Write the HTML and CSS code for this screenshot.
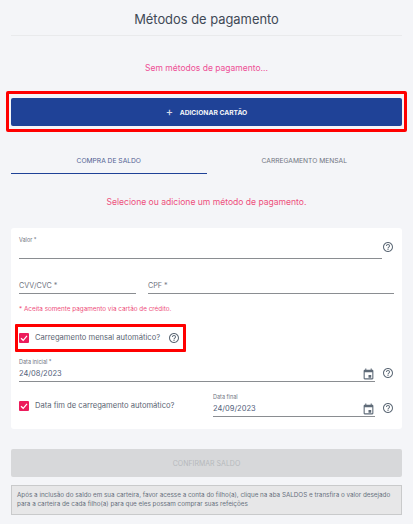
FILE: index.html
```html
<!DOCTYPE html>
<html lang="pt-BR">
<head>
    <meta charset="UTF-8">
    <meta name="viewport" content="width=device-width, initial-scale=1.0">
    <title>Métodos de pagamento</title>
    <link rel="stylesheet" href="styles.css">
</head>
<body>
    <svg class="sprite" width="0" height="0">
        <symbol id="help" viewBox="0 0 24 24">
            <path d="M11 18h2v-2h-2v2zm1-16C6.48 2 2 6.48 2 12s4.48 10 10 10 10-4.48 10-10S17.52 2 12 2zm0 18c-4.41 0-8-3.59-8-8s3.59-8 8-8 8 3.59 8 8-3.59 8-8 8zm0-14c-2.21 0-4 1.79-4 4h2c0-1.1.9-2 2-2s2 .9 2 2c0 2-3 1.75-3 5h2c0-2.25 3-2.5 3-5 0-2.21-1.79-4-4-4z"/>
        </symbol>
        <symbol id="calendar" viewBox="0 0 24 24">
            <path d="M19 3h-1V1h-2v2H8V1H6v2H5c-1.11 0-1.99.9-1.99 2L3 19c0 1.1.89 2 2 2h14c1.1 0 2-.9 2-2V5c0-1.1-.9-2-2-2zm0 16H5V8h14v11zM12 13h5v5h-5z"/>
        </symbol>
    </svg>

    <h1 class="page-title">Métodos de pagamento</h1>
    <p class="no-methods">Sem métodos de pagamento...</p>

    <div class="highlight-add">
        <button class="add-button"><span class="plus">+</span> ADICIONAR CARTÃO</button>
    </div>

    <div class="tabs">
        <div class="tab active">COMPRA DE SALDO</div>
        <div class="tab">CARREGAMENTO MENSAL</div>
    </div>

    <p class="select-msg">Selecione ou adicione um método de pagamento.</p>

    <div class="card">
        <div class="row row-valor">
            <div class="field grow">
                <label class="small-label">Valor *</label>
                <div class="line"></div>
            </div>
            <svg class="help"><use href="#help"/></svg>
        </div>

        <div class="row row-cvv">
            <div class="field cvv">
                <span class="placeholder">CVV/CVC *</span>
                <div class="line"></div>
            </div>
            <div class="field grow">
                <span class="placeholder">CPF *</span>
                <div class="line"></div>
            </div>
        </div>

        <p class="credit-note">* Aceita somente pagamento via cartão de crédito.</p>

        <div class="highlight-auto">
            <span class="check"><svg viewBox="0 0 10 10"><path d="M2 5.2 4.2 7.3 8 2.8"/></svg></span>
            <span class="check-text">Carregamento mensal automático?</span>
            <svg class="help"><use href="#help"/></svg>
        </div>

        <div class="row row-start">
            <div class="field grow">
                <label class="small-label">Data inicial *</label>
                <div class="value-row">
                    <span class="value">24/08/2023</span>
                    <svg class="calendar"><use href="#calendar"/></svg>
                </div>
                <div class="line"></div>
            </div>
            <svg class="help"><use href="#help"/></svg>
        </div>

        <div class="row row-end">
            <div class="end-check">
                <span class="check"><svg viewBox="0 0 10 10"><path d="M2 5.2 4.2 7.3 8 2.8"/></svg></span>
                <span class="check-text">Data fim de carregamento automático?</span>
            </div>
            <div class="field end-date">
                <label class="small-label">Data final</label>
                <div class="value-row">
                    <span class="value">24/09/2023</span>
                    <svg class="calendar"><use href="#calendar"/></svg>
                </div>
                <div class="line"></div>
            </div>
            <svg class="help"><use href="#help"/></svg>
        </div>
    </div>

    <button class="confirm-button" disabled>CONFIRMAR SALDO</button>

    <div class="info-box">Após a inclusão do saldo em sua carteira, favor acesse a conta do filho(a), clique na aba SALDOS e transfira o valor desejado para a carteira de cada filho(a) para que eles possam comprar suas refeições</div>
</body>
</html>
```

FILE: styles.css
```css
* {
    box-sizing: border-box;
}
body {
    margin: 0;
    padding: 0 11px;
    height: 524px;
    overflow: hidden;
    background: #f4f5f8;
    font-family: Inter, "Noto Sans", sans-serif;
    color: #5b6573;
}
.sprite {
    position: absolute;
}
.page-title {
    margin: 0;
    height: 36px;
    padding-top: 11px;
    border-bottom: 1px solid #e9eaec;
    text-align: center;
    font-size: 12.9px;
    line-height: 18px;
    font-weight: 400;
    color: #3f4956;
}
.no-methods {
    margin: 0;
    padding-top: 26px;
    height: 55px;
    text-align: center;
    font-size: 8.5px;
    line-height: 12px;
    color: #ee4f96;
}
.highlight-add {
    margin: 0 -5px;
    padding: 4px 2px 3px;
    height: 41px;
    border: 3px solid #ff0000;
    border-radius: 2px;
}
.add-button {
    display: block;
    width: 100%;
    height: 28px;
    border: none;
    border-radius: 2px;
    background: #1f4297;
    color: #f4f5f8;
    font-family: inherit;
    font-size: 6.7px;
    font-weight: 700;
}
.plus {
    font-size: 11px;
    font-weight: 500;
    vertical-align: -1px;
    margin-right: 5px;
    color: #d5d9e6;
}
.tabs {
    display: flex;
    margin-top: 19px;
}
.tab {
    width: 196px;
    height: 23px;
    padding-top: 5px;
    text-align: center;
    font-size: 6.7px;
    line-height: 10px;
    color: #6f7480;
}
.tab.active {
    color: #515f92;
    border-bottom: 1px solid #1f4297;
}
.select-msg {
    margin: 0;
    padding-top: 22px;
    height: 54px;
    text-align: center;
    font-size: 8.55px;
    line-height: 13px;
    color: #ee4f7c;
}
.card {
    height: 201px;
    padding: 8px 8px 0;
    background: #fff;
    border-radius: 3px;
}
.row {
    display: flex;
    align-items: flex-end;
}
.field {
    display: flex;
    flex-direction: column;
}
.grow {
    flex: 1;
}
.line {
    height: 1px;
    background: #8a8d91;
}
.small-label {
    font-size: 5.5px;
    line-height: 8px;
    color: #6f7480;
}
.placeholder {
    font-size: 7.2px;
    line-height: 10px;
    color: #6f7480;
}
.help {
    flex: none;
    width: 12px;
    height: 12px;
    fill: #5f6b78;
}
.row-valor {
    height: 23px;
}
.row-valor .field {
    height: 23px;
}
.row-valor .line {
    margin-top: auto;
}
.row-valor .help {
    margin-bottom: 6px;
}
.row-cvv {
    margin-top: 22px;
    gap: 12px;
}
.row-cvv .line {
    margin-top: 2px;
}
.cvv {
    width: 117px;
}
.credit-note {
    margin: 10px 0 0;
    font-size: 6.35px;
    line-height: 10px;
    color: #ee4f7c;
}
.highlight-auto {
    display: flex;
    align-items: center;
    margin: 10px 0 0 -4px;
    width: 171px;
    height: 28px;
    padding-left: 1px;
    border: 3px solid #ff0000;
    border-radius: 1px;
    background: #fff;
}
.check {
    flex: none;
    width: 10px;
    height: 10px;
    border-radius: 1px;
    background: #ec1c5c;
    display: flex;
}
.check svg {
    width: 10px;
    height: 10px;
    fill: none;
    stroke: #fff;
    stroke-width: 1.2;
}
.check-text {
    margin-left: 6px;
    font-size: 7.6px;
    line-height: 10px;
    color: #5b6573;
}
.highlight-auto .help {
    margin-left: 8px;
}
.row-start {
    margin-top: 6px;
}
.value-row {
    display: flex;
    align-items: flex-end;
    justify-content: space-between;
    height: 15px;
}
.value {
    padding-bottom: 2px;
    font-size: 7.5px;
    line-height: 11px;
    color: #51607a;
}
.calendar {
    width: 13px;
    height: 13px;
    fill: #5f6b78;
}
.row-start .help,
.row-end .help {
    margin: 0 0 3px 7px;
}
.row-end {
    margin-top: 11px;
}
.end-check {
    display: flex;
    align-items: center;
    width: 194px;
    align-self: flex-start;
    padding-top: 8px;
}
.end-date {
    flex: 1;
}
.confirm-button {
    display: block;
    width: 100%;
    height: 28px;
    margin-top: 20px;
    border: none;
    border-radius: 2px;
    background: #d7d8da;
    color: #b6b8bc;
    font-family: inherit;
    font-size: 7px;
}
.info-box {
    margin-top: 8px;
    height: 30px;
    padding: 5px 8px 5px 5px;
    border: 1px solid #c9cacb;
    background: #e7e7e8;
    font-size: 6.3px;
    line-height: 9px;
    color: #68717e;
}
```
